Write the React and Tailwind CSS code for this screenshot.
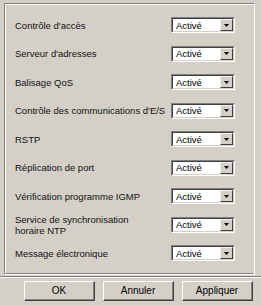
const rows = [
  "Contrôle d'accès",
  "Serveur d'adresses",
  'Balisage QoS',
  "Contrôle des communications d'E/S",
  'RSTP',
  'Réplication de port',
  'Vérification programme IGMP',
  ['Service de synchronisation', 'horaire NTP'],
  'Message électronique',
];

const Select = () => {
  return (
    <div className="w-[64px] h-[16px] border border-t-[#808080] border-l-[#808080] border-b-white border-r-white">
      <div className="h-full flex items-center bg-white border border-t-[#404040] border-l-[#404040] border-b-[#d4d0c8] border-r-[#d4d0c8]">
        <span className="flex-1 pl-[3px] text-[9.5px] leading-none text-black">Activé</span>
        <div className="w-[13px] h-[12px] bg-[#d4d0c8] border border-t-[#f4f2ee] border-l-[#f4f2ee] border-b-[#404040] border-r-[#404040] flex items-center justify-center">
          <svg width="5" height="3" viewBox="0 0 5 3">
            <path d="M0 0h5L2.5 3z" fill="#000" />
          </svg>
        </div>
      </div>
    </div>
  );
};

const Button = ({ label }) => {
  return (
    <button className="w-[71px] h-[20px] border border-t-white border-l-white border-b-[#404040] border-r-[#404040] bg-[#d4d0c8] text-[10px] text-black">
      <div className="h-full flex items-center justify-center border-b border-r border-[#808080] border-t-transparent border-l-transparent">
        {label}
      </div>
    </button>
  );
};

export default function App() {
  return (
    <div
      className="w-[261px] h-[305px] bg-[#d4d0c8] flex flex-col"
      style={{ fontFamily: '"Liberation Sans", Arial, sans-serif' }}
    >
      <div className="mt-[3px] ml-[4px] w-[251px] h-[272px] border border-t-[#808080] border-l-[#808080] border-b-white border-r-white">
        <div className="h-full border border-t-white border-l-white border-b-[#808080] border-r-transparent pt-[6px]">
          {rows.map((r, i) => (
            <div key={i} className="h-[28.5px] flex items-center pl-[9px] pr-[18px]">
              <div className="flex-1 text-[9.5px] leading-[11px] text-[#111] whitespace-nowrap">
                {Array.isArray(r) ? (
                  <>
                    {r[0]}
                    <br />
                    {r[1]}
                  </>
                ) : (
                  r
                )}
              </div>
              <Select />
            </div>
          ))}
        </div>
      </div>
      <div className="mt-[1px] border-t border-[#808080] border-b border-b-white" />
      <div className="flex gap-[8px] pl-[24px] mt-[3px]">
        <Button label="OK" />
        <Button label="Annuler" />
        <Button label="Appliquer" />
      </div>
    </div>
  );
}
